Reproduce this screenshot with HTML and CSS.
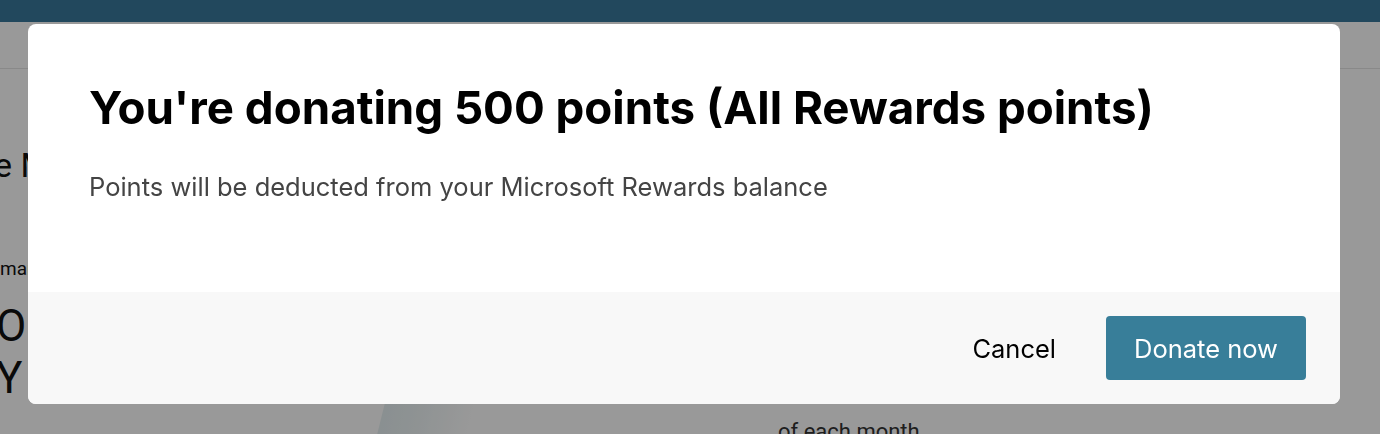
FILE: index.html
```html
<!DOCTYPE html>
<html lang="en">
<head>
<meta charset="utf-8">
<title>Donate points</title>
<link rel="stylesheet" href="styles.css">
</head>
<body>
<div class="page">
  <header class="topbar"></header>
  <div class="subbar"></div>
  <main class="content">
    <div class="blob"></div>
    <div class="left">
      <h1 class="big">e Make-A-Wish</h1>
      <p class="small">many wishes come true</p>
      <p class="huge">O<br>Y</p>
    </div>
    <div class="right">
      <p class="dots">Points are donated on the first day</p>
      <p class="month">of each month</p>
    </div>
  </main>
</div>
<div class="overlay"></div>
<div class="modal" role="dialog">
  <div class="modal-body">
    <h2 class="title">You're donating 500 points (All Rewards points)</h2>
    <p class="subtitle">Points will be deducted from your Microsoft Rewards balance</p>
  </div>
  <div class="modal-footer">
    <button class="btn-cancel">Cancel</button>
    <button class="btn-donate">Donate now</button>
  </div>
</div>
</body>
</html>
```
FILE: styles.css
```css
* { box-sizing: border-box; }
html, body { margin: 0; padding: 0; }
body {
  width: 1380px;
  height: 434px;
  overflow: hidden;
  background: #ffffff;
  font-family: Roboto, "Liberation Sans", sans-serif;
}
.page { display: flex; flex-direction: column; height: 434px; overflow: hidden; }
.topbar { height: 22px; background: #39799b; flex: none; }
.subbar { height: 47px; background: #ffffff; border-bottom: 1px solid #e4e4e4; flex: none; }
.content { position: relative; display: flex; flex: 1; }
.left { position: relative; width: 300px; margin-left: -6px; }
.big {
  margin: 76px 0 0 0;
  font-weight: 400;
  font-size: 34px;
  line-height: 40px;
  color: #111;
  white-space: nowrap;
}
.small {
  margin: 73px 0 0 6px;
  font-size: 19px;
  line-height: 22px;
  color: #111;
  white-space: nowrap;
}
.huge {
  margin: 20px 0 0 2px;
  font-size: 44px;
  line-height: 52px;
  color: #111;
}
.right { position: relative; margin-left: 484px; padding-top: 306px; }
.dots { margin: 0 0 6px 0; font-size: 22px; line-height: 34px; color: #333; white-space: nowrap; }
.month { margin: 0; font-size: 22px; line-height: 34px; color: #333; white-space: nowrap; }
.blob {
  position: absolute;
  left: 372px;
  top: 326px;
  width: 90px;
  height: 120px;
  transform: skewX(-14deg);
  background: linear-gradient(90deg, #e6f0f2 0%, #eef5f6 40%, #ffffff 100%);
}
.overlay { position: fixed; inset: 0; background: rgba(0,0,0,0.4); }
.modal {
  position: fixed;
  left: 28px;
  top: 24px;
  width: 1312px;
  height: 380px;
  background: #ffffff;
  border-radius: 8px;
  overflow: hidden;
  display: flex;
  flex-direction: column;
}
.modal-body { height: 268px; padding: 58px 61px 0; }
.title {
  margin: 0;
  font-family: Inter, "Liberation Sans", sans-serif;
  font-weight: 700;
  font-size: 45.7px;
  line-height: 52px;
  color: #000;
  white-space: nowrap;
}
.subtitle {
  margin: 38px 0 0 0;
  font-family: Inter, "Liberation Sans", sans-serif;
  font-size: 25.5px;
  line-height: 30px;
  color: #444;
  white-space: nowrap;
}
.modal-footer {
  flex: 1;
  background: #f8f8f8;
  display: flex;
  align-items: center;
  justify-content: flex-end;
  gap: 50px;
  padding: 0 34px 0 0;
}
.btn-cancel {
  border: 0;
  background: none;
  padding: 0;
  font-family: Inter, "Liberation Sans", sans-serif;
  font-size: 25.5px;
  color: #000;
}
.btn-donate {
  border: 0;
  width: 200px;
  height: 64px;
  border-radius: 4px;
  background: #387e99;
  color: #ffffff;
  font-family: Inter, "Liberation Sans", sans-serif;
  font-size: 25.5px;
}
```
